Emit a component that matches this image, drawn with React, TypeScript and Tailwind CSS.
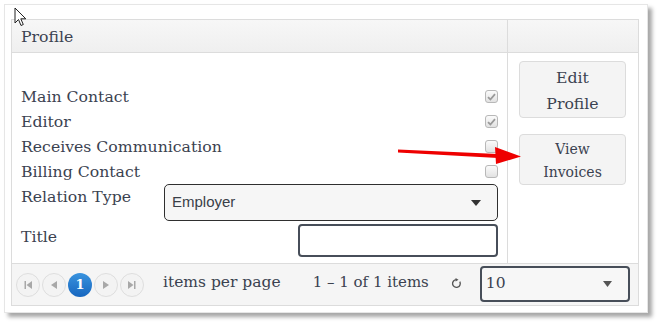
import React from 'react';

const serif = { fontFamily: '"DejaVu Serif", "Liberation Serif", serif' };

function Check({ checked }: { checked?: boolean }) {
  return (
    <span className="flex h-[13px] w-[13px] items-center justify-center rounded-[3px] border border-[#b8b8b8] bg-gradient-to-b from-[#fbfbfb] to-[#e2e2e2]">
      {checked && (
        <svg width="9" height="8" viewBox="0 0 9 8">
          <path d="M1 4.2 L3.4 6.5 L8 1.2" fill="none" stroke="#9a9a9a" strokeWidth="1.8" />
        </svg>
      )}
    </span>
  );
}

function PagerBtn({ children }: { children: React.ReactNode }) {
  return (
    <span className="flex h-[24px] w-[24px] items-center justify-center rounded-full border border-[#dedede] bg-[#f3f3f3]">
      {children}
    </span>
  );
}

const rows: { label: string; checked: boolean }[] = [
  { label: 'Main Contact', checked: true },
  { label: 'Editor', checked: true },
  { label: 'Receives Communication', checked: false },
  { label: 'Billing Contact', checked: false },
];

export default function App() {
  return (
    <div className="relative h-[325px] w-[657px] bg-white text-[#3b4250]" style={serif}>
      {/* card */}
      <div className="ml-[4px] pt-[4px]">
        <div className="h-[309px] w-[644px] border border-[#e6e6e6] bg-white pl-[6px] pt-[14px] shadow-[4px_4px_4px_rgba(0,0,0,0.35)]">
          <div className="w-[628px] border border-[#dcdcdc]">
            {/* header */}
            <div className="flex h-[33px] border-b border-[#dcdcdc] bg-gradient-to-b from-[#f7f7f7] to-[#efefef]">
              <div className="flex w-[496px] items-center border-r border-[#dcdcdc] pl-[9px] pt-[1px] text-[15.7px]">Profile</div>
              <div className="flex-1" />
            </div>

            {/* body */}
            <div className="flex h-[210px]">
              <div className="w-[496px] border-r border-[#dcdcdc] pl-[9px] pr-[9px] pt-[31px] text-[15.7px]">
                {rows.map(r => (
                  <div key={r.label} className="flex h-[25px] items-center justify-between">
                    <span>{r.label}</span>
                    <Check checked={r.checked} />
                  </div>
                ))}
                <div className="flex h-[40px] items-start">
                  <span className="w-[143px] leading-[25px]">Relation Type</span>
                  <div
                    className="flex h-[37px] flex-1 items-center justify-between rounded-[5px] border border-[#2f2f2f] bg-[#f6f6f6] pl-[7px] pr-[16px] text-[15px] text-[#3a3f48]"
                    style={{ fontFamily: '"Liberation Sans", Arial, sans-serif' }}
                  >
                    <span>Employer</span>
                    <svg width="10" height="6" viewBox="0 0 10 6"><path d="M0 0 H10 L5 6 Z" fill="#333" /></svg>
                  </div>
                </div>
                <div className="flex items-start">
                  <span className="w-[277px] leading-[25px]">Title</span>
                  <div className="h-[33px] flex-1 rounded-[4px] border-2 border-[#474e59] bg-white" />
                </div>
              </div>
              <div className="flex-1 pl-[11px] pt-[8px]">
                <div className="flex h-[57px] w-[107px] flex-col items-center justify-center rounded-[4px] border border-[#dcdcdc] bg-[#f4f4f4] pt-[2px] text-[15.7px] leading-[26px]">
                  <span>Edit</span>
                  <span>Profile</span>
                </div>
                <div className="mt-[16px] flex h-[51px] w-[107px] flex-col items-center justify-center rounded-[4px] border border-[#dcdcdc] bg-[#f4f4f4] pt-[2px] text-[14px] leading-[23px]">
                  <span>View</span>
                  <span>Invoices</span>
                </div>
              </div>
            </div>

            {/* footer */}
            <div className="flex h-[42px] items-center border-t border-[#dcdcdc] bg-[#f5f5f5] pl-[4px] text-[15.5px]">
              <div className="flex items-center gap-[2px]">
                <PagerBtn>
                  <svg width="8" height="8" viewBox="0 0 8 8"><path d="M0.5 0 H2 V8 H0.5 Z M8 0 V8 L2.5 4 Z" fill="#a8a8a8" /></svg>
                </PagerBtn>
                <PagerBtn>
                  <svg width="6" height="8" viewBox="0 0 6 8"><path d="M6 0 V8 L0 4 Z" fill="#a8a8a8" /></svg>
                </PagerBtn>
                <span className="flex h-[24px] w-[24px] items-center justify-center rounded-full bg-gradient-to-b from-[#3a93de] to-[#1566bf] text-[13px] font-bold text-white">
                  1
                </span>
                <PagerBtn>
                  <svg width="6" height="8" viewBox="0 0 6 8"><path d="M0 0 V8 L6 4 Z" fill="#a8a8a8" /></svg>
                </PagerBtn>
                <PagerBtn>
                  <svg width="8" height="8" viewBox="0 0 8 8"><path d="M0 0 V8 L5.5 4 Z M6 0 H7.5 V8 H6 Z" fill="#a8a8a8" /></svg>
                </PagerBtn>
              </div>
              <span className="mb-[4px] ml-[19px]">items per page</span>
              <span className="mb-[4px] ml-[32px] text-[15px]">1 – 1 of 1 items</span>
              <svg className="mb-[2px] ml-[22px]" width="11" height="11" viewBox="0 0 12 12">
                <path d="M9.6 4 A4.2 4.2 0 1 1 6 1.8" fill="none" stroke="#555" strokeWidth="1.5" />
                <path d="M5 0 L8.2 1.9 L5 3.8 Z" fill="#555" />
              </svg>
              <div className="mb-[1px] ml-[18px] flex h-[36px] w-[150px] items-center justify-between rounded-[4px] border-2 border-[#474e59] bg-[#f7f7f7] pl-[4px] pr-[16px] text-[15.5px]">
                <span>10</span>
                <svg width="9" height="6" viewBox="0 0 9 6"><path d="M0 0 H9 L4.5 6 Z" fill="#555" /></svg>
              </div>
            </div>
          </div>
        </div>
      </div>

      {/* red arrow annotation */}
      <svg className="absolute left-0 top-0" width="657" height="325" style={{ pointerEvents: 'none' }}>
        <polygon points="398,149.5 498,154 498,158 398,152.5" fill="#ee0000" />
        <polygon points="495,147 521,156.5 496,164" fill="#ee0000" />
      </svg>

      {/* mouse cursor */}
      <svg className="absolute left-[14px] top-[7px]" width="14" height="20" viewBox="0 0 14 20">
        <path d="M1 1 L1 16 L4.5 12.5 L7 18.5 L9.3 17.5 L6.8 11.8 L11.8 11.8 Z" fill="white" stroke="#222" strokeWidth="1" strokeLinejoin="round" />
      </svg>
    </div>
  );
}
